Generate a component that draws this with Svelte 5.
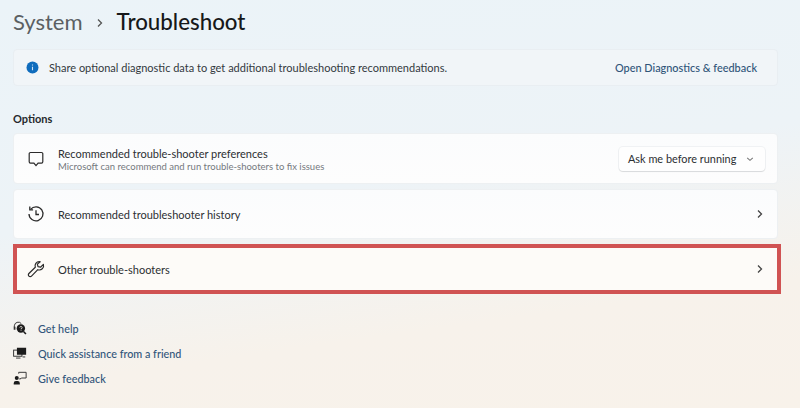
<script>
  // Footer links under the options list
  const links = [
    { label: 'Get help', icon: 'help' },
    { label: 'Quick assistance from a friend', icon: 'assist' },
    { label: 'Give feedback', icon: 'feedback' }
  ];
</script>

<main class="page">
  <header class="crumbs">
    <span class="parent">System</span>
    <svg class="crumb-sep" width="8" height="10" viewBox="0 0 8 10"><path d="M2 1.500 5.500 5 2 8.500" fill="none" stroke="#555" stroke-width="1.300"/></svg>
    <h1>Troubleshoot</h1>
  </header>

  <section class="banner">
    <svg class="info" width="13" height="13" viewBox="0 0 13 13">
      <circle cx="6.500" cy="6.500" r="6" fill="#0f6cbd"/>
      <path d="M6.500 5.800v3.400M6.500 3.600v1" stroke="#cfe4f5" stroke-width="1.100"/>
    </svg>
    <span class="banner-text">Share optional diagnostic data to get additional troubleshooting recommendations.</span>
    <span class="banner-link">Open Diagnostics &amp; feedback</span>
  </section>

  <h2>Options</h2>

  <div class="list">
    <div class="row tall">
      <svg class="row-icon" width="18" height="18" viewBox="0 0 18 18">
        <path d="M3.500 2.500h11a1.300 1.300 0 0 1 1.300 1.300v8a1.300 1.300 0 0 1-1.300 1.300h-3.400L9 15.600l-2.100-2.500H3.500a1.300 1.300 0 0 1-1.300-1.300v-8a1.300 1.300 0 0 1 1.300-1.300z" fill="none" stroke="#2b2b2b" stroke-width="1.200"/>
      </svg>
      <div class="row-text">
        <div class="title">Recommended trouble-shooter preferences</div>
        <div class="sub">Microsoft can recommend and run trouble-shooters to fix issues</div>
      </div>
      <div class="select">
        <span>Ask me before running</span>
        <svg width="8" height="8" viewBox="0 0 10 10"><path d="M1.500 3.500 5 6.700l3.500-3.200" fill="none" stroke="#777" stroke-width="1.300"/></svg>
      </div>
    </div>

    <div class="row">
      <svg class="row-icon" width="18" height="18" viewBox="0 0 18 18">
        <path d="M3.600 4.400A7 7 0 1 1 2 9" fill="none" stroke="#2b2b2b" stroke-width="1.300"/>
        <path d="M2.800 1.600v3.300h3.300" fill="none" stroke="#2b2b2b" stroke-width="1.300"/>
        <path d="M9 5.200V9.500h3" fill="none" stroke="#2b2b2b" stroke-width="1.300"/>
      </svg>
      <div class="row-text"><div class="title">Recommended troubleshooter history</div></div>
      <svg class="chev" width="10" height="12" viewBox="0 0 10 12"><path d="M3 2.500l3.500 3.500-3.500 3.500" fill="none" stroke="#444" stroke-width="1.300"/></svg>
    </div>

    <div class="row marked">
      <svg class="row-icon" width="18" height="18" viewBox="0 0 18 18">
        <path d="M12.300 1.500a4.300 4.300 0 0 0-4 5.700L1.900 13.500a1.800 1.800 0 0 0 2.600 2.600l6.300-6.400a4.300 4.300 0 0 0 5.600-5.300l-2.900 2.800-2.500-.6-.6-2.500 2.800-2.400a4.300 4.300 0 0 0-.9-.2z" fill="none" stroke="#2b2b2b" stroke-width="1.200" stroke-linejoin="round"/>
      </svg>
      <div class="row-text"><div class="title">Other trouble-shooters</div></div>
      <svg class="chev" width="10" height="12" viewBox="0 0 10 12"><path d="M3 2.500l3.500 3.500-3.500 3.500" fill="none" stroke="#444" stroke-width="1.300"/></svg>
    </div>
  </div>

  <nav class="links">
    {#each links as link}
      <div class="link">
        <svg width="14" height="14" viewBox="0 0 16 16">
          {#if link.icon === 'help'}
            <path d="M1.500 7V5.500a4.500 4.500 0 0 1 8-2.500" fill="none" stroke="#333" stroke-width="1.100"/>
            <rect x="0.800" y="6.500" width="2" height="3.500" fill="#333"/>
            <circle cx="9" cy="8.500" r="4.800" fill="#1b1b1b"/>
            <path d="M12 12l2.800 2.800" stroke="#1b1b1b" stroke-width="1.800"/>
            <path d="M7.800 7.500a1.300 1.300 0 1 1 1.400 1.300v.8M9.200 10.400v.8" fill="none" stroke="#f5f1ea" stroke-width="0.900"/>
          {:else if link.icon === 'assist'}
            <rect x="0.700" y="4.700" width="9.500" height="7" fill="none" stroke="#333" stroke-width="1.100"/>
            <rect x="4.500" y="2" width="10.500" height="8" fill="#1b1b1b"/>
            <path d="M3.500 13.800h5" stroke="#333" stroke-width="1.100"/>
            <path d="M11 12.500h3" stroke="#333" stroke-width="1.100"/>
          {:else}
            <path d="M6.500 3V1.500h8.500v6.500H9.500L8 9.500V8" fill="none" stroke="#333" stroke-width="1.100"/>
            <circle cx="4.300" cy="8" r="2.300" fill="#1b1b1b"/>
            <path d="M0.800 15.500v-1.500a2.500 2.500 0 0 1 2.500-2.500h2a2.500 2.500 0 0 1 2.500 2.500v1.500z" fill="#1b1b1b"/>
          {/if}
        </svg>
        <span>{link.label}</span>
      </div>
    {/each}
  </nav>
</main>

<style>
  :global(body) {
    margin: 0;
  }

  .page {
    box-sizing: border-box;
    width: 800px;
    height: 408px;
    overflow: hidden;
    padding: 7px 22px 0 13px;
    background: linear-gradient(172deg, #ebf3f8 0%, #edf3f7 45%, #f7f2eb 75%, #f8f2ea 100%);
    font-family: Lato, "Noto Sans", sans-serif;
    color: #1c1c1c;
  }

  .crumbs {
    display: flex;
    align-items: center;
    height: 30px;
    margin-bottom: 12px;
    font-size: 22px;
    line-height: 30px;
  }

  .parent {
    color: #5b5f63;
  }

  .crumb-sep {
    margin: 2px 13px 0 13px;
  }

  h1 {
    margin: 0;
    font-size: 22.300px;
    font-weight: 500;
    color: #16181a;
  }

  .banner {
    display: flex;
    align-items: center;
    height: 37px;
    padding: 0 20px 0 12px;
    background: #f1f5f8;
    border: 1px solid #e9eef2;
    border-radius: 4px;
    box-sizing: border-box;
  }

  .info {
    margin-right: 10px;
  }

  .banner-text {
    flex: 1;
    font-size: 11px;
    color: #33393e;
  }

  .banner-link {
    font-size: 10.900px;
    font-weight: 500;
    color: #2f5478;
    white-space: nowrap;
  }

  h2 {
    margin: 25px 0 6px;
    font-size: 11px;
    line-height: 16px;
    font-weight: 700;
    color: #26292c;
  }

  .list {
    display: flex;
    flex-direction: column;
    gap: 5px;
  }

  .row {
    box-sizing: border-box;
    display: flex;
    align-items: center;
    height: 50px;
    padding: 0 12px 0 13px;
    background: linear-gradient(180deg, #fbfcfd, #fdfdfd);
    border: 1px solid #edf0f2;
    border-radius: 4px;
  }

  .tall {
    height: 51px;
  }

  .row-icon {
    flex: none;
    margin-right: 13px;
  }

  .row-text {
    flex: 1;
    padding-top: 2px;
  }

  .title {
    font-size: 11px;
    line-height: 14px;
    color: #2c2f32;
  }

  .sub {
    font-size: 9.500px;
    line-height: 12px;
    color: #75797d;
  }

  .select {
    display: flex;
    align-items: center;
    justify-content: space-between;
    box-sizing: border-box;
    width: 146px;
    height: 24px;
    padding: 0 11px 0 9px;
    background: #fefefe;
    border-radius: 4px;
    box-shadow: 0 1px 1px rgba(0, 0, 0, 0.1), 0 0 0 1px #f0f2f4;
    font-size: 10.900px;
    white-space: nowrap;
    color: #2c2f32;
  }

  .marked {
    width: 768px;
    padding: 0 12px 0 10px;
    background: #fdfbf8;
    border: 4px solid #d05353;
    border-radius: 0;
  }

  .links {
    display: flex;
    flex-direction: column;
    gap: 5px;
    margin-top: 24px;
  }

  .link {
    display: flex;
    align-items: center;
    height: 20px;
    font-size: 10.800px;
    font-weight: 500;
    color: #31557a;
  }

  .link svg {
    margin-right: 11px;
  }
</style>
